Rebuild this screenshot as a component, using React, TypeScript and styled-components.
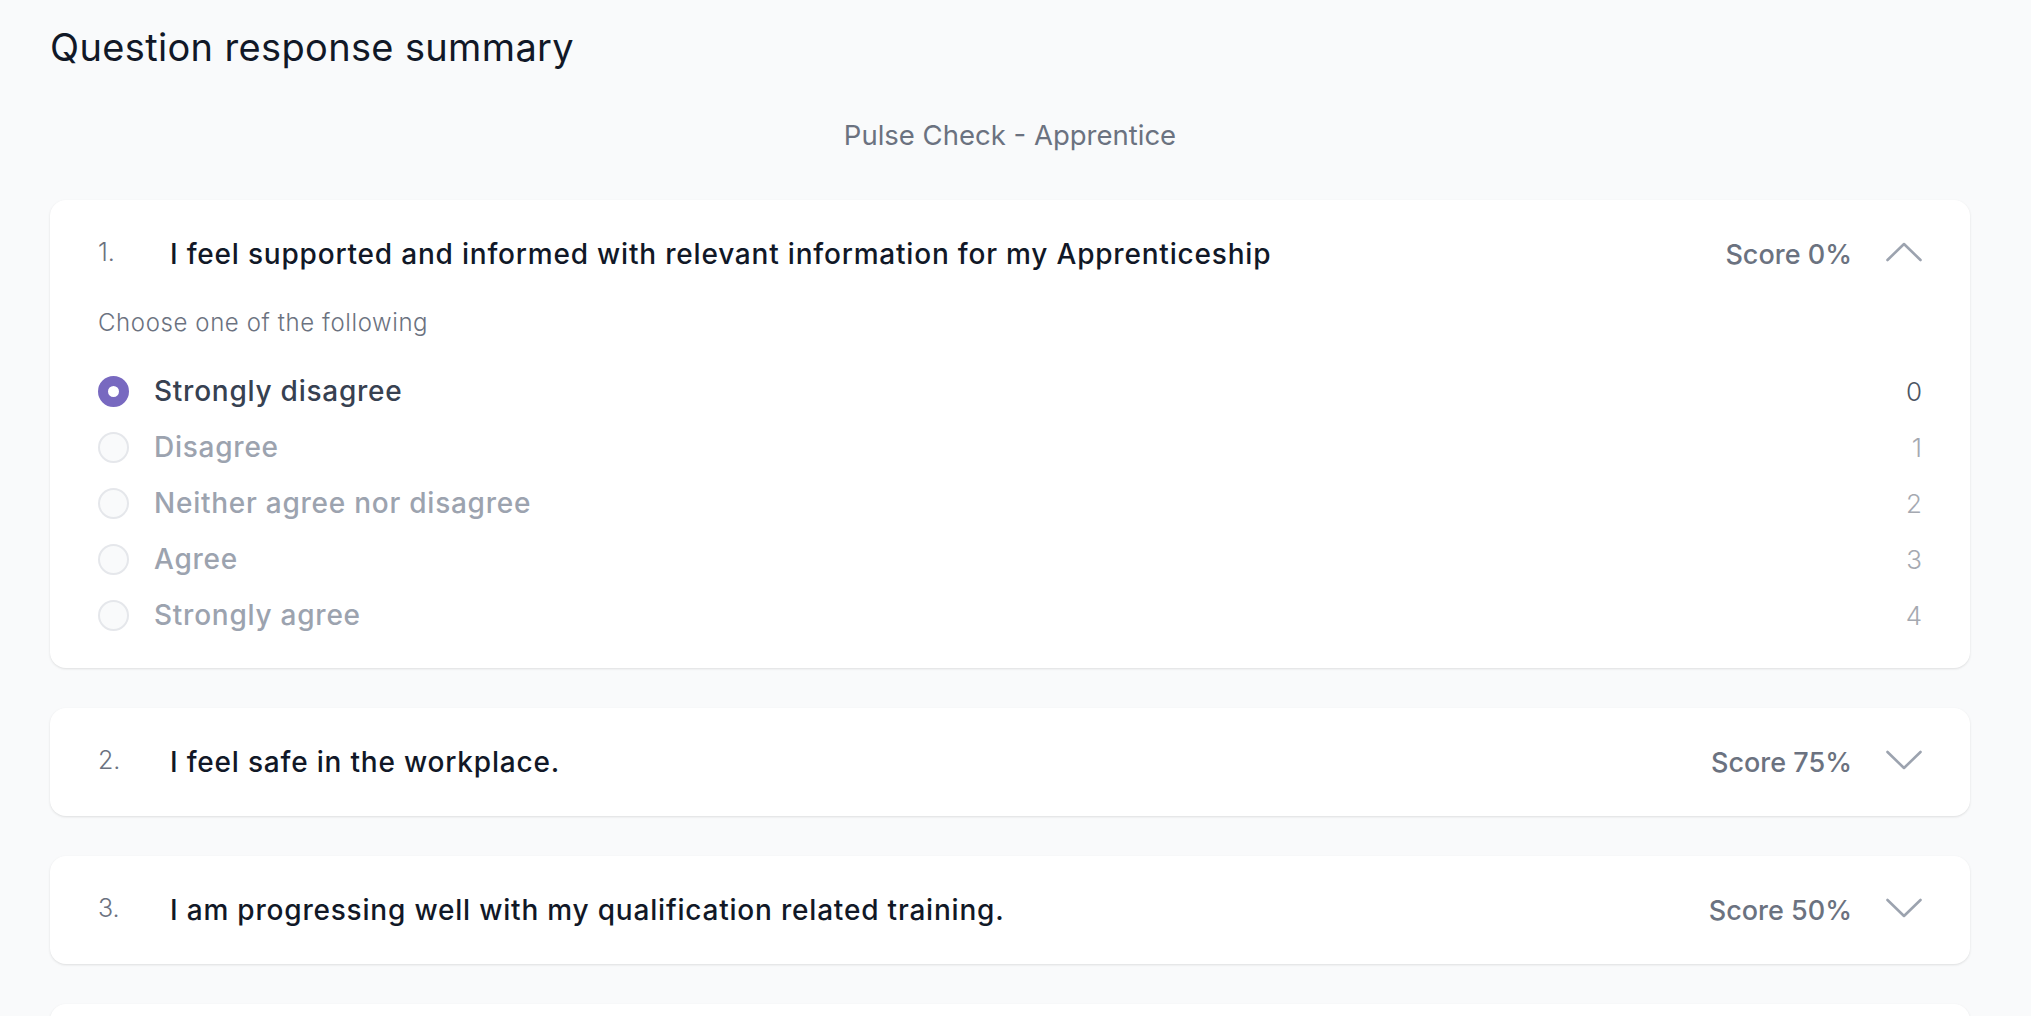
import styled, { createGlobalStyle } from 'styled-components';

const GlobalStyle = createGlobalStyle`
  html, body {
    margin: 0;
    padding: 0;
    background: #f9fafb;
    font-family: Inter, "Open Sans", sans-serif;
  }
  * { box-sizing: border-box; }
`;

const Page = styled.div`
  padding: 20px 61px 0 50px;
  height: 1016px;
  overflow: hidden;
`;

const Heading = styled.h1`
  margin: 0;
  font-size: 38px;
  line-height: 54px;
  font-weight: 400;
  letter-spacing: 0.35px;
  color: #111827;
`;

const SurveyName = styled.p`
  margin: 41px 0 0;
  text-align: center;
  font-size: 27.5px;
  line-height: 40px;
  font-weight: 400;
  color: #6b7280;
`;

const QuestionList = styled.div`
  margin-top: 45px;
  display: flex;
  flex-direction: column;
  gap: 40px;
`;

const Card = styled.section`
  background: #ffffff;
  border-radius: 16px;
  padding: 0 48px;
  box-shadow: 0 1px 3px rgba(0, 0, 0, 0.08), 0 1px 2px rgba(0, 0, 0, 0.04);
`;

const Header = styled.div`
  display: flex;
  align-items: center;
  height: 108px;
`;

const Number = styled.span`
  width: 72px;
  flex-shrink: 0;
  font-size: 25px;
  font-weight: 300;
  color: #6b7280;
  margin-top: -4px;
`;

const QuestionText = styled.h2`
  flex: 1;
  margin: 0;
  font-size: 28px;
  font-weight: 500;
  letter-spacing: 0.8px;
  color: #111827;
`;

const Score = styled.span`
  font-size: 27px;
  font-weight: 450;
  color: #6b7280;
  margin-right: 34px;
`;

const Chevron = styled.svg`
  width: 36px;
  height: 20px;
  flex-shrink: 0;
  margin-top: -4px;
`;

const Body = styled.div`
  padding-bottom: 25px;
`;

const Hint = styled.p`
  margin: 0;
  font-size: 24px;
  line-height: 30px;
  font-weight: 300;
  letter-spacing: 0.6px;
  color: #6b7280;
`;

const Options = styled.ul`
  list-style: none;
  margin: 25px 0 0;
  padding: 0;
`;

const Option = styled.li`
  display: flex;
  align-items: center;
  height: 56px;
`;

const Radio = styled.span<{ $checked: boolean }>`
  width: 31px;
  height: 31px;
  border-radius: 50%;
  flex-shrink: 0;
  margin-right: 25px;
  background: ${({ $checked }) => ($checked ? '#ffffff' : '#f9fafb')};
  border: ${({ $checked }) => ($checked ? '10px solid #7869c0' : '2px solid #e5e7eb')};
`;

const OptionLabel = styled.span<{ $checked: boolean }>`
  flex: 1;
  font-size: 28px;
  font-weight: 500;
  letter-spacing: 0.75px;
  color: ${({ $checked }) => ($checked ? '#374151' : '#9ca3af')};
`;

const OptionValue = styled.span<{ $checked: boolean }>`
  font-size: 26px;
  font-weight: 300;
  color: ${({ $checked }) => ($checked ? '#4b5563' : '#a5a9b1')};
`;

const options = ['Strongly disagree', 'Disagree', 'Neither agree nor disagree', 'Agree', 'Strongly agree'];

type Question = {
  id: number;
  text: string;
  score: number;
  answer: number;
  open: boolean;
};

const questions: Question[] = [
  { id: 1, text: 'I feel supported and informed with relevant information for my Apprenticeship', score: 0, answer: 0, open: true },
  { id: 2, text: 'I feel safe in the workplace.', score: 75, answer: 3, open: false },
  { id: 3, text: 'I am progressing well with my qualification related training.', score: 50, answer: 2, open: false },
  { id: 4, text: 'I have a good relationship with my supervisor.', score: 100, answer: 4, open: false },
];

function ChevronIcon({ up }: { up: boolean }) {
  return (
    <Chevron viewBox="0 0 36 20" fill="none">
      <polyline
        points={up ? '1.5,18 18,2 34.5,18' : '1.5,2 18,18 34.5,2'}
        stroke="#9ca3af"
        strokeWidth="2.6"
        strokeLinecap="round"
        strokeLinejoin="round"
      />
    </Chevron>
  );
}

export default function App() {
  return (
    <>
      <GlobalStyle />
      <Page>
        <Heading>Question response summary</Heading>
        <SurveyName>Pulse Check - Apprentice</SurveyName>
        <QuestionList>
          {questions.map((q) => (
            <Card key={q.id}>
              <Header>
                <Number>{q.id}.</Number>
                <QuestionText>{q.text}</QuestionText>
                <Score>Score {q.score}%</Score>
                <ChevronIcon up={q.open} />
              </Header>
              {q.open && (
                <Body>
                  <Hint>Choose one of the following</Hint>
                  <Options>
                    {options.map((label, i) => (
                      <Option key={label}>
                        <Radio $checked={i === q.answer} />
                        <OptionLabel $checked={i === q.answer}>{label}</OptionLabel>
                        <OptionValue $checked={i === q.answer}>{i}</OptionValue>
                      </Option>
                    ))}
                  </Options>
                </Body>
              )}
            </Card>
          ))}
        </QuestionList>
      </Page>
    </>
  );
}
